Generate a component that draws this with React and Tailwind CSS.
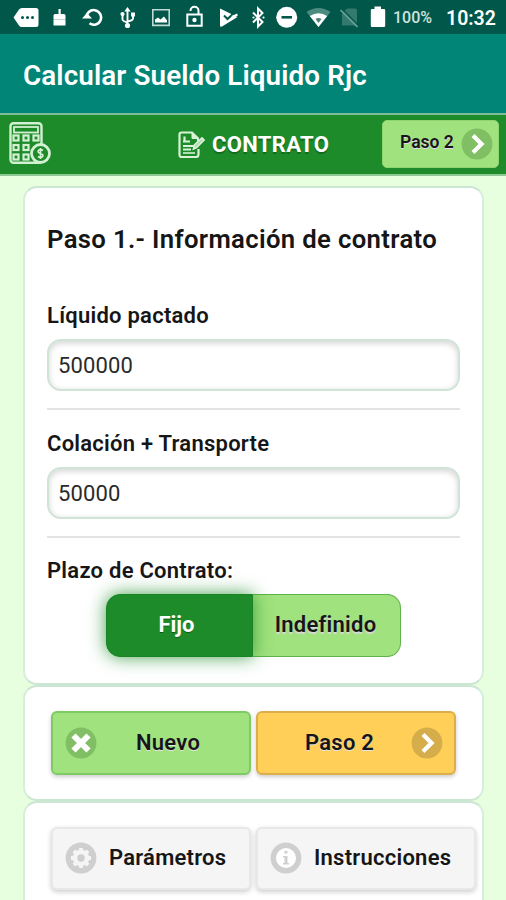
import React, { useState } from 'react';

const Icono = ({ x, w, ml, children }) => (
  <svg
    className={`shrink-0 ${ml}`}
    width={w}
    height="34"
    viewBox={`${x} 0 ${w} 34`}
    fill="#fff"
  >
    {children}
  </svg>
);

const BarraEstado = () => (
  <div className="flex h-[34px] bg-[#00574a]">
    <Icono x={13} w={26} ml="ml-[13px]">
      <path d="M13.5 17.500 19 9.500q1-1.500 3-1.500h14q2.500 0 2.500 2.500v14q0 2.500-2.500 2.500H22q-2 0-3-1.500z" />
      <g fill="#00574a"><circle cx="22.500" cy="17.500" r="1.500" /><circle cx="27.500" cy="17.500" r="1.500" /><circle cx="32.500" cy="17.500" r="1.500" /></g>
    </Icono>
    <Icono x={53} w={13} ml="ml-[14px]">
      <path d="M58.500 9h2.200v5h3.300q1.500 0 1.500 1.500V19.800h-12v-4.300q0-1.500 1.500-1.500h3.500zM53.500 20h12v5.500h-12z" />
    </Icono>
    <Icono x={82} w={21} ml="ml-[16px]">
      <path d="M86.500 18a7.300 7.300 0 1 1 3 5.300" fill="none" stroke="#fff" strokeWidth="2.600" />
      <path d="M82 18.500 87 13l5 5.500z" />
    </Icono>
    <Icono x={120} w={16} ml="ml-[17px]">
      <path d="M127.500 10v16M122.500 15v4.500q0 1.500 5 3M133 14v4.500q0 2-5.500 3" fill="none" stroke="#fff" strokeWidth="1.900" />
      <path d="m127.500 7 3.200 4.500h-6.400zM131 12.500h4v4h-4z" />
      <circle cx="122.500" cy="14" r="2.100" /><circle cx="127.500" cy="25.500" r="2.600" />
    </Icono>
    <Icono x={152} w={18} ml="ml-[16px]">
      <path d="M152.800 9.800h16.400v15.600h-16.400z" fill="none" stroke="#c2d8d4" strokeWidth="1.600" />
      <path d="M155 22.500v-3l3-2 2.500 2 3.500-3 3 4v2z" />
    </Icono>
    <Icono x={186} w={18} ml="ml-[16px]">
      <path d="M187.300 14.500h14.400v11.200h-14.400zM190.500 11v-.2a4 4 0 0 1 8 0V14" fill="none" stroke="#fff" strokeWidth="2" />
      <circle cx="194.500" cy="20" r="2.200" />
    </Icono>
    <Icono x={219} w={20} ml="ml-[15px]">
      <path d="M220 8.500 237.500 17 222 26.500q-2 1-2-1z" />
      <path d="m224 15.500 3.500 3.500 7-6.500" fill="none" stroke="#00574a" strokeWidth="2" />
      <path d="m232 17 5.500-2.500" stroke="#fff" strokeWidth="2" />
    </Icono>
    <Icono x={252} w={13} ml="ml-[13px]">
      <path d="m253 12.500 9.500 9.500-4.500 4.500V8.500l4.500 4.500L253 22.500" fill="none" stroke="#fff" strokeWidth="2" />
      <circle cx="253.500" cy="17.500" r="1.100" /><circle cx="263.500" cy="17.500" r="1.100" />
    </Icono>
    <Icono x={276} w={22} ml="ml-[11px]">
      <circle cx="286.700" cy="17.300" r="10.500" />
      <path d="M281.500 16h10.500v2.600h-10.500z" fill="#00574a" />
    </Icono>
    <Icono x={306} w={25} ml="ml-[8px]">
      <path d="M306.500 12q12-8 24 0L318.500 27z" fill="#4c8b80" />
      <path d="M309.800 16q8.700-5.500 17.400 0L318.500 27z" />
      <path d="M315.500 19q3-2 6 0l-3 4z" fill="#4c8178" />
    </Icono>
    <Icono x={339} w={20} ml="ml-[8px]">
      <path d="M342 13.500 347 8.500h8q2 0 2 2V25.500h-15z" fill="#33796e" />
      <path d="m342 9 16.500 16.500" stroke="#00574a" strokeWidth="1.500" />
      <path d="m340.500 10 17 17" stroke="#6f9f97" strokeWidth="1.700" />
    </Icono>
    <Icono x={370} w={16} ml="ml-[11px]">
      <path d="M374.500 6.500h6.500V9h3q1.200 0 1.200 1.200v15.600q0 1.200-1.200 1.200h-12q-1.200 0-1.200-1.200V10.200Q370.800 9 372 9h2.500z" />
    </Icono>
    <span className="ml-[7px] w-[40px] whitespace-nowrap text-[16px] leading-[36px] font-medium text-[#d0e2df]">100%</span>
    <span className="ml-[13px] whitespace-nowrap text-[19.500px] leading-[37px] font-semibold text-white">10:32</span>
  </div>
);

const Calculadora = () => (
  <svg className="mb-[3px] ml-[9px] shrink-0" width="42" height="42" viewBox="0 0 42 42" fill="none" stroke="#d3f0d2" strokeWidth="2.400">
    <rect x="1.500" y="1.200" width="31" height="39.500" rx="3" />
    <rect x="5" y="5" width="24" height="5.500" strokeWidth="1.800" />
    <g strokeWidth="2.200">
      <rect x="4.500" y="13.500" width="5" height="5" /><rect x="14.500" y="13.500" width="5" height="5" /><rect x="24.500" y="13.500" width="5" height="5" />
      <rect x="4.500" y="23" width="5" height="5" /><rect x="14.500" y="23" width="5" height="5" />
      <rect x="4.500" y="32.500" width="5" height="5" /><rect x="14.500" y="32.500" width="5" height="5" />
    </g>
    <circle cx="31.500" cy="31.500" r="9" fill="#1d8b29" strokeWidth="2.800" />
    <path d="M34 28.500q-2-1.500-4-.5c-2 1.500-.5 3 1.500 3.500s3.500 2 1.500 3.500q-2 1-4-.5M31.500 26v11" strokeWidth="1.700" />
  </svg>
);

const Documento = () => (
  <svg className="mr-[7px] shrink-0" width="27" height="27" viewBox="0 0 27 27" fill="none" stroke="#d9f2d8" strokeWidth="2.200">
    <path d="M20.500 18v5.500q0 2.500-2.500 2.500H3.500Q1.500 26 1.500 24V3.500q0-2 2-2H14l6 6v4" />
    <path d="M14 1.500V7.500h6z" fill="#d9f2d8" strokeWidth="1" />
    <path d="M6.500 5.500v6M5 10.500h7M5 15h11M5 18.500h8" strokeWidth="2.200" />
    <path d="M5 22h12" strokeWidth="1.600" />
    <path d="m15.500 18 1-4 7.500-7 2 2-7.500 7.500z" fill="#a9d8a9" strokeWidth="1.700" />
  </svg>
);

const Disco = ({ color, children }) => (
  <svg className="shrink-0" width="32" height="32" viewBox="0 0 32 32">
    <circle cx="16" cy="16" r="15.400" fill={color} />
    {children}
  </svg>
);

const Flecha = ({ color }) => (
  <Disco color={color}>
    <path d="m12 7.500 8.500 8.500-8.500 8.500" fill="none" stroke="#fff" strokeWidth="4.300" />
  </Disco>
);

const Campo = ({ etiqueta, valor, onChange }) => (
  <div className="mb-[18px] h-[110px] border-b-2 border-[#e3e3e3]">
    <label className="block">
      <span className="block h-[39px] text-[22px] leading-[31px] font-semibold tracking-[0.250px]">{etiqueta}</span>
      <input
        className="block h-[52px] w-full rounded-[14px] border-2 border-[#cfe3d6] bg-white px-[9px] text-[22px] tracking-[0.150px] text-[#2a2a2a] shadow-[inset_0_2px_6px_rgba(0,0,0,0.18)] outline-none"
        type="text"
        value={valor}
        onChange={e => onChange(e.target.value)}
      />
    </label>
  </div>
);

const panel = 'rounded-[14px] border-2 border-x-[#d6eedb] border-y-[#cbe6d2] bg-white';
const boton = 'flex items-center rounded-[6px] border-2 text-[22px] font-semibold';

const App = () => {

  const [ liquido, guardarLiquido ] = useState('500000');
  const [ colacion, guardarColacion ] = useState('50000');

  return (
    <div className="h-[900px] w-[506px] overflow-hidden bg-[#e8ffdf] font-['Roboto',sans-serif] text-[#161616]">
      <BarraEstado />

      <h1 className="h-[79px] bg-[#008577] pl-[23px] text-[27.800px] leading-[83px] font-semibold tracking-[0.120px] text-white">
        Calcular Sueldo Liquido Rjc
      </h1>

      <header className="flex h-[63px] items-center border-y-2 border-t-[#7dbd9c] border-b-[#8fc795] bg-[#1d8b29]">
        <Calculadora />
        <h2 className="ml-[127px] flex w-[160px] items-center text-[22px] font-bold tracking-[0.350px] whitespace-nowrap text-white [text-shadow:0_2px_0_#146b1e]">
          <Documento />
          CONTRATO
        </h2>
        <button className="mb-[2px] ml-[44px] flex h-[48px] w-[117px] items-center rounded-[5px] border border-[#8fd56d] bg-[#a0e27d] pl-[17px] text-[17.500px] font-semibold whitespace-nowrap [text-shadow:0_1px_0_#e8d5f0]">
          <span className="w-[61px] pb-[2px] text-left">Paso 2</span>
          <Flecha color="#80bf64" />
        </button>
      </header>

      <main className="mt-[10px] ml-[23px] w-[461px]">
        <section className={`${panel} h-[499px] px-[22px] pt-[35px]`}>
          <h3 className="h-[77px] text-[25.700px] leading-[32px] font-semibold tracking-[0.340px] whitespace-nowrap">
            Paso 1.- Información de contrato
          </h3>
          <Campo etiqueta="Líquido pactado" valor={liquido} onChange={guardarLiquido} />
          <Campo etiqueta="Colación + Transporte" valor={colacion} onChange={guardarColacion} />
          <p className="text-[22px] leading-[29px] font-semibold tracking-[0.250px]">Plazo de Contrato:</p>
          <div className="mt-[9px] ml-[59px] flex h-[63px] w-[295px] text-[22px] font-semibold">
            <button className="z-10 w-[147px] rounded-l-[14px] border border-[#188424] bg-[#1d8b29] pr-[6px] pb-[2px] font-bold text-white shadow-[0_0_18px_rgba(29,139,41,0.8)] [text-shadow:0_1px_0_#0f5c18]">
              Fijo
            </button>
            <button className="w-[148px] rounded-r-[14px] border border-l-0 border-[#5fb14a] bg-[#a0e27d] pr-[2px] pb-[2px] tracking-[0.250px] [text-shadow:0_2px_1px_#d9d9d9]">
              Indefinido
            </button>
          </div>
        </section>

        <section className={`${panel} flex h-[116px] gap-[5px] pt-[24px] pl-[26px]`}>
          <button className={`${boton} h-[64px] w-[200px] border-[#7fca63] bg-[#a0e27d] pb-[1px] pl-[12px] tracking-[0.250px] shadow-[0_2px_4px_rgba(0,0,0,0.2)] [text-shadow:0_1px_0_#e3e3e3]`}>
            <Disco color="#80bf64">
              <path d="m8.500 8.500 15 15m0-15-15 15" stroke="#fff" strokeWidth="6" />
            </Disco>
            <span className="ml-[39px]">Nuevo</span>
          </button>
          <button className={`${boton} h-[64px] w-[200px] border-[#dcae4a] bg-[#ffcf57] pb-[1px] pl-[47px] tracking-[0.250px] shadow-[0_2px_4px_rgba(0,0,0,0.2)] [text-shadow:0_1px_0_#e3e3e3]`}>
            <span className="w-[106px] text-left">Paso 2</span>
            <Flecha color="#d6ad4b" />
          </button>
        </section>

        <section className={`${panel} flex h-[115px] gap-[5px] pt-[24px] pl-[26px]`}>
          <button className={`${boton} h-[63px] w-[200px] shrink-0 border-[#e8e8e8] bg-[#f5f5f5] pb-[2px] pl-[12px] tracking-[0.250px] shadow-[0_2px_5px_rgba(0,0,0,0.2)]`}>
            <Disco color="#cfcfcf">
              <circle cx="16" cy="16" r="6" fill="none" stroke="#f5f5f5" strokeWidth="4.600" />
              <path
                d="M16 6v4M16 22v4M6 16h4M22 16h4M8.900 8.900l3 3M20.100 20.100l3 3M8.900 23.100l3-3M20.100 11.900l3-3"
                stroke="#f5f5f5"
                strokeWidth="3.800"
              />
            </Disco>
            <span className="ml-[12px]">Parámetros</span>
          </button>
          <button className={`${boton} h-[63px] w-[220px] shrink-0 border-[#e8e8e8] bg-[#f5f5f5] pb-[2px] pl-[12px] tracking-[0.250px] shadow-[0_2px_5px_rgba(0,0,0,0.2)]`}>
            <Disco color="#cfcfcf">
              <circle cx="16" cy="16" r="10" fill="#fff" />
              <path d="M14.500 9h3v2.500h-3zM13 14h4.500v7H19v1.500h-6V21h1.500v-5.500H13z" fill="#cfcfcf" />
            </Disco>
            <span className="ml-[12px]">Instrucciones</span>
          </button>
        </section>
      </main>
    </div>
  );
}

export default App;
